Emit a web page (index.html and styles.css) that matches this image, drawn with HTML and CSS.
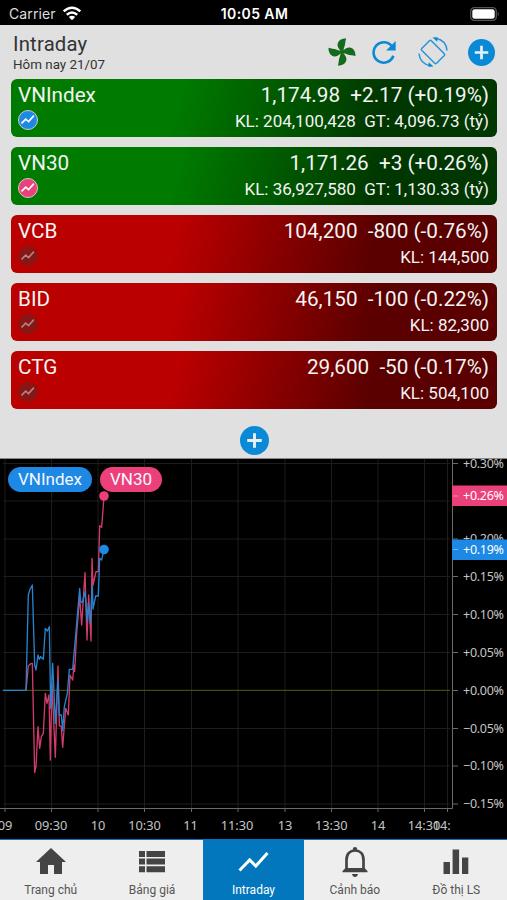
FILE: index.html
```html
<!DOCTYPE html>
<html lang="vi">
<head>
<meta charset="utf-8">
<title>Intraday</title>
<link rel="stylesheet" href="styles.css">
</head>
<body>
<svg class="defs" width="0" height="0" aria-hidden="true">
  <symbol id="trend" viewBox="0 0 24 24"><path d="M3.5 17.5 9.5 11.5 13.5 15 21 6.5" fill="none" stroke="currentColor" stroke-width="2.3"/></symbol>
  <symbol id="plus" viewBox="0 0 28 28"><circle cx="14" cy="14" r="14" fill="#0a8ad6"/><path d="M14 7v14M7 14h14" stroke="#e8f0f4" stroke-width="2.8"/></symbol>
</svg>
<div class="app">
  <header class="status">
    <div class="carrier">Carrier
      <svg width="20" height="15" viewBox="0 0 20 15" fill="none" stroke="#fff" stroke-width="2.5"><path d="M1.7 5.4Q10-1.8 18.3 5.4M4.8 8.7Q10 4.2 15.2 8.7"/><path d="M10 14.2 6.8 11Q10 8.5 13.2 11Z" fill="#fff" stroke="none"/></svg>
    </div>
    <div class="clock">10:05 AM</div>
    <div class="battery"><svg width="30" height="14" viewBox="0 0 30 14"><rect x=".7" y=".7" width="25.6" height="12.6" rx="3.6" fill="none" stroke="#555" stroke-width="1.3"/><rect x="2.3" y="2.2" width="22.4" height="9.6" rx="2.3" fill="#fff"/><path d="M27.8 4.8q2.2 2.2 0 4.4z" fill="#555"/></svg></div>
  </header>
  <section class="quotes">
    <div class="head">
      <div><h1>Intraday</h1><p class="date">Hôm nay 21/07</p></div>
      <div class="tools">
        <svg width="28" height="28" viewBox="-14 -14 28 28" fill="#156b1c"><path id="blade" d="M-.8.8C-1.5-2.5-5-4-4.4-8-3.6-12 0-13.6 4.2-13.5 3-11 3.6-8 2.3-5 1.6-3.5 1.8-1.5.8-.8Z"/><use href="#blade" transform="rotate(90)"/><use href="#blade" transform="rotate(180)"/><use href="#blade" transform="rotate(270)"/></svg>
        <svg width="24" height="24" viewBox="0 0 24 24"><path d="M20.2 6.7A10.2 10.2 0 1 0 21.4 15.8" fill="none" stroke="#0a8ad6" stroke-width="2.6"/><path d="M23.7 1v9.6h-9.6z" fill="#0a8ad6"/></svg>
        <svg width="30" height="30" viewBox="0 0 30 30" fill="none" stroke="#2b93d6" stroke-width="1.5"><rect x="8.2" y="4.5" width="13.6" height="21" rx="1.3" transform="rotate(-45 15 15)"/><path d="M1 16.5C1.5 23 6 27.5 12.5 28.7M29 13.5C28.5 7 24 2.5 17.5 1.3"/><path d="M10.8 25.3 15.5 29.5 10.3 29.7ZM19.2 4.7 14.5.5 19.7.3Z" fill="#0a8ad6" stroke="none"/></svg>
        <svg width="27" height="27"><use href="#plus"/></svg>
      </div>
    </div>
    <div class="card up">
      <div class="side"><div class="sym">VNIndex</div><span class="mark blue"><svg><use href="#trend"/></svg></span></div>
      <div class="nums"><div class="price">1,174.98&nbsp; +2.17 (+0.19%)</div><div class="vol">KL: 204,100,428&nbsp; GT: 4,096.73 (tỷ)</div></div>
    </div>
    <div class="card up">
      <div class="side"><div class="sym">VN30</div><span class="mark pink"><svg><use href="#trend"/></svg></span></div>
      <div class="nums"><div class="price">1,171.26&nbsp; +3 (+0.26%)</div><div class="vol">KL: 36,927,580&nbsp; GT: 1,130.33 (tỷ)</div></div>
    </div>
    <div class="card down">
      <div class="side"><div class="sym">VCB</div><span class="mark off"><svg><use href="#trend"/></svg></span></div>
      <div class="nums"><div class="price">104,200&nbsp; -800 (-0.76%)</div><div class="vol">KL: 144,500</div></div>
    </div>
    <div class="card down">
      <div class="side"><div class="sym">BID</div><span class="mark off"><svg><use href="#trend"/></svg></span></div>
      <div class="nums"><div class="price">46,150&nbsp; -100 (-0.22%)</div><div class="vol">KL: 82,300</div></div>
    </div>
    <div class="card down">
      <div class="side"><div class="sym">CTG</div><span class="mark off"><svg><use href="#trend"/></svg></span></div>
      <div class="nums"><div class="price">29,600&nbsp; -50 (-0.17%)</div><div class="vol">KL: 504,100</div></div>
    </div>
    <div class="more"><svg width="29" height="29"><use href="#plus"/></svg></div>
  </section>
  <section class="chart">
    <svg class="plot" width="507" height="380" viewBox="0 0 507 380">
      <path class="grid" d="M5 0V349M51.5 0V349M98 0V349M144.5 0V349M191.5 0V349M238 0V349M285 0V349M331.5 0V349M378 0V349M424.5 0V349M447.5 0V349M3 4.5H450M3 42H450M3 80H450M3 117.5H450M3 155.5H450M3 193.5H450M3 269.5H450M3 307H450M3 345H450"/>
      <path d="M3 231.3H450" stroke="#5c5c10"/>
      <path class="axis" d="M0 349.5H452.5M452.5 0V349.5M5 349v4M51.5 349v4M98 349v4M144.5 349v4M191.5 349v4M238 349v4M285 349v4M331.5 349v4M378 349v4M424.5 349v4M447.5 349v4M453 4.5h5M453 80h5M453 117.5h5M453 155.5h5M453 193.5h5M453 231.5h5M453 269.5h5M453 307h5M453 345h5"/>
      <g transform="translate(0 101) scale(.33333)" fill="none" stroke-width="4" stroke-linejoin="round">
        <path stroke="#d23c6c" d="M78 391 85 318 92 311 97 310 104 638 108 620 114 500 119 565 124 530 130 520 136 400 141 430 147 405 151 600 156 370 166 592 174 318 178 497 184 500 188 562 197 445 205 465 210 345 218 360 222 315 224 335 230 220 239 110 245 195 255 38 261 240 266 105 273 243 276-5 279 75 288 35 295 35 299-103 305-98 312-191"/>
        <path stroke="#2684cf" d="M8 391H78L85 105 90 88 97 75 104 315 108 330 114 285 118 298 122 290 130 298 136 205 142 213 148 200 152 445 158 310 166 490 174 360 178 465 184 465 188 512 193 440 202 400 208 328 218 328 228 215 239 85 242 125 247 128 255 95 262 185 265 130 271 190 277 75 279 147 287 108 295 108 299-5 305 0 312-31"/>
      </g>
      <circle cx="104" cy="37" r="4.8" fill="#ec407a"/><circle cx="104" cy="90.5" r="4.8" fill="#1e88e5"/>
      <clipPath id="scale"><rect x="453" y="0" width="54" height="349.5"/></clipPath>
      <g class="label" clip-path="url(#scale)">
        <text x="463" y="8.8" textLength="41">+0.30%</text><text x="463" y="84.4" textLength="41">+0.20%</text><text x="463" y="122.2" textLength="41">+0.15%</text><text x="463" y="160" textLength="41">+0.10%</text><text x="463" y="197.9" textLength="41">+0.05%</text><text x="463" y="235.8" textLength="41">+0.00%</text><text x="463" y="273.6" textLength="41">−0.05%</text><text x="463" y="311.4" textLength="41">−0.10%</text><text x="463" y="349.4" textLength="41">−0.15%</text>
      </g>
      <path fill="#ec407a" d="M452 26.5h55v20.5h-55z"/><path fill="#1e88e5" d="M452 80.5h55v20.5h-55z"/><path d="M453 37h5M453 90.5h5" stroke="#fff" opacity=".4"/>
      <g class="label lit"><text x="463" y="41.3" textLength="41">+0.26%</text><text x="463" y="94.8" textLength="41">+0.19%</text></g>
      <clipPath id="hours"><rect x="0" y="350" width="451" height="30"/></clipPath>
      <g class="label time" clip-path="url(#hours)">
        <text x="5" y="371">09</text><text x="51" y="371">09:30</text><text x="98" y="371">10</text><text x="144.5" y="371">10:30</text><text x="190.5" y="371">11</text><text x="237" y="371">11:30</text><text x="285" y="371">13</text><text x="331.3" y="371">13:30</text><text x="378" y="371">14</text><text x="424" y="371">14:30</text><text x="449" y="371">14:45</text>
      </g>
    </svg>
    <div class="legend"><span class="chip blue">VNIndex</span><span class="chip pink">VN30</span></div>
  </section>
  <nav class="tabs">
    <div class="tab"><svg viewBox="0 0 30 30"><path fill="#444" d="M15 2 30 16H26V28H18V19H12V28H4V16H0Z"/></svg>Trang chủ</div>
    <div class="tab"><svg viewBox="0 0 30 30"><path fill="#444" d="M2 5h6v6H2zM9.5 5H28v6H9.5zM2 12.5h6v6H2zM9.5 12.5H28v6H9.5zM2 20.3h6v6H2zM9.5 20.3H28v6H9.5z"/></svg>Bảng giá</div>
    <div class="tab active"><svg viewBox="0 0 30 30"><path fill="none" stroke="#fff" stroke-width="3" d="M1.5 24.5 11.7 14 17.8 20 29.5 7"/></svg>Intraday</div>
    <div class="tab"><svg viewBox="0 0 30 30"><path fill="none" stroke="#444" stroke-width="2.7" d="M6.5 24V14C6.5 7.8 10 4.5 15 4.5S23.5 7.8 23.5 14V24"/><path fill="#444" d="M2.5 26.2v-1.2l3-3h19l3 3v1.2zM12 28h6q-.6 3-3 3t-3-3zM12.8 5V3q0-2 2.2-2t2.2 2v2z"/></svg>Cảnh báo</div>
    <div class="tab"><svg viewBox="0 0 30 30"><path fill="#444" d="M2.5 16H9v12H2.5zM11.6 3.5h6.5V28h-6.5zM21 11.5h6.3V28H21z"/></svg>Đồ thị LS</div>
  </nav>
</div>
</body>
</html>
```
FILE: styles.css
```css
* { box-sizing: border-box; }
body { margin: 0; background: #000; font-family: Roboto, sans-serif; }
.defs { position: absolute; }
.app { width: 507px; height: 900px; display: flex; flex-direction: column; overflow: hidden; }
.status { height: 25px; padding: 2px 7px 0 9px; background: #000; color: #fff; display: grid; grid-template-columns: 1fr auto 1fr; align-items: center; font-family: Inter, sans-serif; font-size: 14px; }
.carrier { display: flex; align-items: center; gap: 6px; color: #ddd; font-size: 14px; letter-spacing: .1px; }
.clock { font-weight: 600; font-size: 14px; letter-spacing: .4px; }
.battery { display: flex; justify-content: flex-end; }
.quotes { height: 434px; padding: 0 10px 0 11px; background: #e0e0e0; border-bottom: 1px solid #888; }
.head { height: 54px; display: flex; justify-content: space-between; padding: 8px 2px 0; color: #333; }
h1 { margin: 0; font-size: 20.3px; line-height: 23px; font-weight: 400; letter-spacing: .2px; }
.date { margin: 0; font-size: 13.4px; line-height: 17px; }
.tools { display: flex; align-items: center; gap: 16px; height: 38px; }
.tools svg:nth-child(3) { margin: 0 4px 0 6px; }
.card { height: 58px; margin-bottom: 10px; padding: 4px 8px 0 7px; border-radius: 6px; display: flex; justify-content: space-between; color: #f4f4f4; }
.up { background: linear-gradient(105deg, #007b00 34%, #003600 76%); }
.down { background: linear-gradient(105deg, #bb0000 34%, #5a0000 74%); }
.sym, .price { font-size: 20.7px; line-height: 25px; white-space: nowrap; }
.nums { text-align: right; }
.vol { font-size: 17px; line-height: 26px; white-space: nowrap; }
.mark { display: flex; width: 20px; height: 20px; border-radius: 50%; margin-top: 2px; border: 1.5px solid #ccc; color: #fff; }
.mark svg { width: 17px; height: 17px; }
.blue { background: #1e88e5; }
.pink { background: #ec407a; }
.mark.off { background: #8a1515; border-color: #8a1515; color: #ad8585; }
.more { display: flex; justify-content: center; padding-top: 7px; }
.chart { position: relative; height: 380px; background: #000; }
.plot { display: block; }
.grid { stroke: #1d1d1d; fill: none; }
.axis { stroke: #6b6b6b; fill: none; }
.label { font-family: "Noto Sans", sans-serif; font-size: 12.5px; fill: #c4c4c4; }
.lit { fill: #fff; }
.time { text-anchor: middle; font-size: 12.8px; }
.legend { position: absolute; left: 8px; top: 8px; display: flex; gap: 8px; }
.chip { height: 25px; border-radius: 13px; padding: 0 10px; font-size: 17px; line-height: 24px; color: #f4f8ff; }
.tabs { height: 61px; border-top: 1px solid #0277bd; background: #eee; display: grid; grid-template-columns: repeat(5, 1fr); }
.tab { display: flex; flex-direction: column; align-items: center; padding-top: 6px; font-size: 12px; line-height: 14px; color: #555; gap: 7px; }
.tab svg { width: 30px; height: 30px; overflow: visible; }
.active { background: #0277bd; color: #fff; }
```
